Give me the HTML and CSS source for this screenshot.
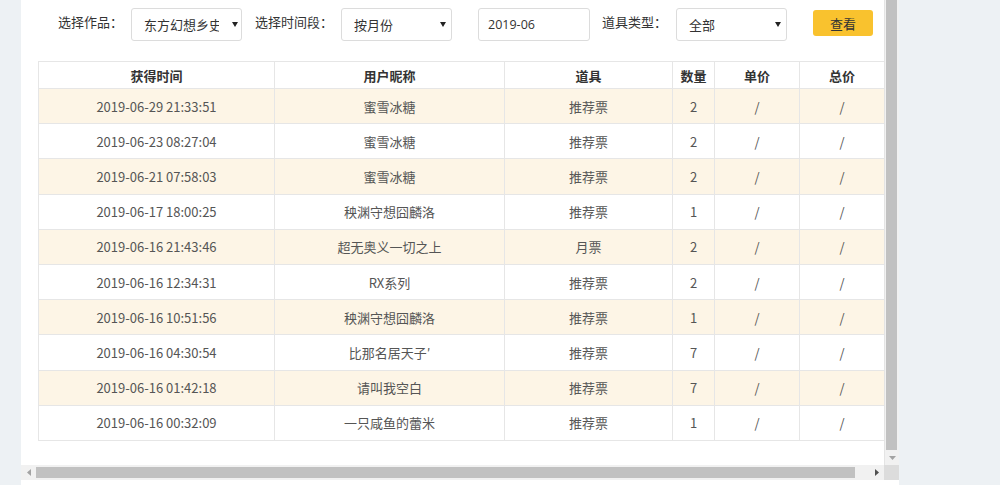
FILE: index.html
```html
<!DOCTYPE html>
<html lang="zh-CN">
<head>
<meta charset="utf-8">
<title>道具记录</title>
<link rel="stylesheet" href="styles.css">
</head>
<body>
<div class="page">
  <div class="panel">
    <div class="viewport">
      <div class="filters">
        <span class="label">选择作品：</span>
        <div class="select sel-work"><span class="sel-text">东方幻想乡史记</span><svg class="caret" width="6" height="5" viewBox="0 0 6 5"><path d="M0 0H6L3 5Z" fill="#222"/></svg></div>
        <span class="label label2">选择时间段：</span>
        <div class="select"><span class="sel-text">按月份</span><svg class="caret" width="6" height="5" viewBox="0 0 6 5"><path d="M0 0H6L3 5Z" fill="#222"/></svg></div>
        <div class="input">2019-06</div>
        <span class="label label3">道具类型：</span>
        <div class="select"><span class="sel-text">全部</span><svg class="caret" width="6" height="5" viewBox="0 0 6 5"><path d="M0 0H6L3 5Z" fill="#222"/></svg></div>
        <button class="btn">查看</button>
      </div>
      <table class="records">
        <colgroup>
          <col class="c1"><col class="c2"><col class="c3"><col class="c4"><col class="c5"><col class="c6">
        </colgroup>
        <thead>
          <tr><th>获得时间</th><th>用户昵称</th><th>道具</th><th>数量</th><th>单价</th><th>总价</th></tr>
        </thead>
        <tbody>
          <tr><td>2019-06-29 21:33:51</td><td>蜜雪冰糖</td><td>推荐票</td><td>2</td><td>/</td><td>/</td></tr>
          <tr><td>2019-06-23 08:27:04</td><td>蜜雪冰糖</td><td>推荐票</td><td>2</td><td>/</td><td>/</td></tr>
          <tr><td>2019-06-21 07:58:03</td><td>蜜雪冰糖</td><td>推荐票</td><td>2</td><td>/</td><td>/</td></tr>
          <tr><td>2019-06-17 18:00:25</td><td>秧渊守想囧麟洛</td><td>推荐票</td><td>1</td><td>/</td><td>/</td></tr>
          <tr><td>2019-06-16 21:43:46</td><td>超无奥义一切之上</td><td>月票</td><td>2</td><td>/</td><td>/</td></tr>
          <tr><td>2019-06-16 12:34:31</td><td>RX系列</td><td>推荐票</td><td>2</td><td>/</td><td>/</td></tr>
          <tr><td>2019-06-16 10:51:56</td><td>秧渊守想囧麟洛</td><td>推荐票</td><td>1</td><td>/</td><td>/</td></tr>
          <tr><td>2019-06-16 04:30:54</td><td>比那名居天子′</td><td>推荐票</td><td>7</td><td>/</td><td>/</td></tr>
          <tr><td>2019-06-16 01:42:18</td><td>请叫我空白</td><td>推荐票</td><td>7</td><td>/</td><td>/</td></tr>
          <tr><td>2019-06-16 00:32:09</td><td>一只咸鱼的蕾米</td><td>推荐票</td><td>1</td><td>/</td><td>/</td></tr>
        </tbody>
      </table>
    </div>
    <div class="vscroll">
      <div class="vthumb"></div>
      <div class="sbtn"><svg width="7" height="4" viewBox="0 0 7 4"><path d="M0 0H7L3.5 4Z" fill="#a3a3a3"/></svg></div>
    </div>
    <div class="hscroll">
      <div class="sbtn"><svg width="4" height="7" viewBox="0 0 4 7"><path d="M4 0V7L0 3.5Z" fill="#a3a3a3"/></svg></div>
      <div class="htrack"><div class="hthumb"></div></div>
      <div class="sbtn"><svg width="4" height="7" viewBox="0 0 4 7"><path d="M0 0V7L4 3.5Z" fill="#505050"/></svg></div>
    </div>
    <div class="corner"></div>
  </div>
</div>
</body>
</html>
```

FILE: styles.css
```css
html, body {
  margin: 0;
  padding: 0;
}
body {
  background: #edf1f4;
  font-family: "Microsoft YaHei", "Noto Sans CJK SC", sans-serif;
  font-size: 13px;
  color: #333;
  width: 1000px;
  height: 485px;
  overflow: hidden;
}
.page {
  display: flex;
  padding-left: 21px;
  height: 485px;
}
.panel {
  width: 878px;
  height: 485px;
  background: #fff;
  display: grid;
  grid-template-columns: 863px 15px;
  grid-template-rows: 465px 15px;
  align-content: start;
}
.viewport {
  overflow: hidden;
  background: #fff;
}
.filters {
  display: flex;
  align-items: center;
  height: 33px;
  padding-top: 7px;
  padding-left: 37px;
}
.label {
  font-size: 13px;
  color: #333;
  margin-right: 8px;
  margin-top: -5px;
  white-space: nowrap;
}
.label2 { margin-left: 13px; }
.label3 { margin-left: 12px; margin-right: 9px; }
.select, .input {
  box-sizing: border-box;
  width: 111px;
  height: 33px;
  border: 1px solid #dcdcdc;
  border-radius: 3px;
  display: flex;
  align-items: center;
  padding-left: 12px;
  padding-right: 5px;
  color: #333;
  font-size: 13px;
  margin-top: 1px;
}
.sel-text {
  flex: 1;
  overflow: hidden;
  white-space: nowrap;
  padding-top: 1px;
}
.sel-work .sel-text {
  flex: 0 0 75px;
  margin-right: 13px;
}
.caret {
  flex: none;
  margin-right: 0;
}
.input {
  margin-left: 26px;
  width: 112px;
  padding-left: 9px;
  padding-top: 1px;
  font-family: "Open Sans", "Noto Sans CJK SC", sans-serif;
  font-size: 12.5px;
}
.btn {
  margin-left: 26px;
  width: 60px;
  height: 26px;
  border: none;
  border-radius: 3px;
  background: #f9c22e;
  color: #333;
  font-family: "Microsoft YaHei", "Noto Sans CJK SC", sans-serif;
  font-size: 13px;
  padding: 0;
  margin-top: -1px;
}
.records {
  margin-top: 21px;
  margin-left: 17px;
  border-collapse: collapse;
  table-layout: fixed;
  width: 846px;
}
.c1 { width: 236px; }
.c2 { width: 230px; }
.c3 { width: 168px; }
.c4 { width: 42px; }
.c5 { width: 85px; }
.c6 { width: 85px; }
.records th, .records td {
  border: 1px solid #e6e6e6;
  text-align: center;
  padding: 0;
  white-space: nowrap;
}
.records th {
  height: 26px;
  font-weight: bold;
  color: #333;
  font-size: 13px;
}
.records td {
  height: 34.2px;
  color: #555;
  font-size: 13px;
}
.records tbody tr:nth-child(odd) td {
  background: #fdf5e6;
}
.vscroll {
  background: #f1f1f1;
  display: flex;
  flex-direction: column;
  border-left: 1px solid #e4e4e4;
}
.vthumb {
  flex: 1;
  margin: 0 2px 0 1px;
  background: #c1c1c1;
}
.sbtn {
  flex: none;
  width: 15px;
  height: 15px;
  display: flex;
  align-items: center;
  justify-content: center;
}
.vscroll .sbtn { width: 14px; }
.hscroll {
  background: #f1f1f1;
  display: flex;
}
.htrack {
  flex: 1;
  display: flex;
  align-items: center;
}
.hthumb {
  width: 819px;
  height: 11px;
  background: #c1c1c1;
}
.corner {
  background: #dcdcdc;
}
```
